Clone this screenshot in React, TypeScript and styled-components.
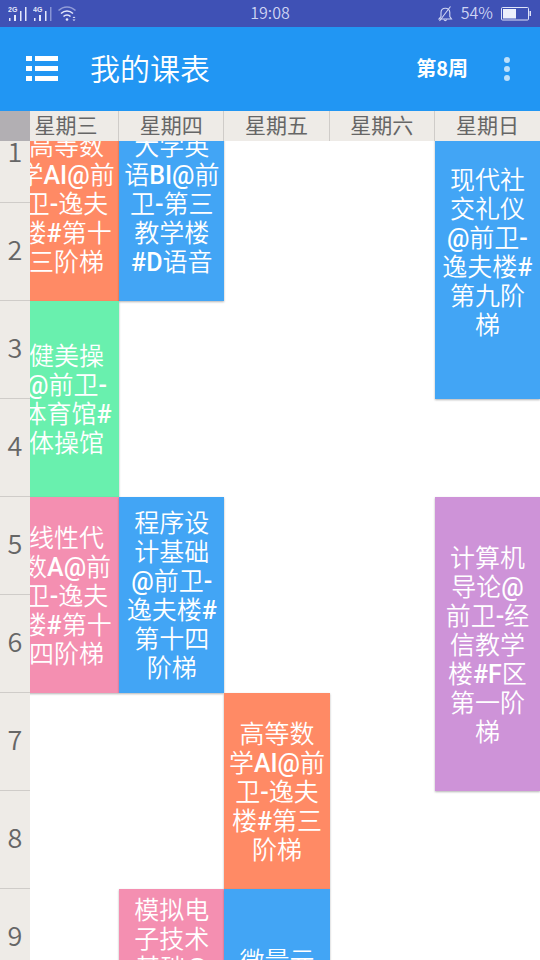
import React from 'react';
import styled, { createGlobalStyle } from 'styled-components';

const GlobalStyle = createGlobalStyle`
  * { box-sizing: border-box; }
  body {
    margin: 0;
    background: #fff;
    font-family: Roboto, 'Noto Sans CJK SC', sans-serif;
  }
  button {
    margin: 0;
    padding: 0;
    border: 0;
    background: none;
    color: inherit;
    font: inherit;
  }
`;

const Screen = styled.div`
  display: flex;
  flex-direction: column;
  height: 100vh;
  overflow: hidden;
`;

const StatusBar = styled.div`
  display: grid;
  grid-template-columns: 1fr auto 1fr;
  align-items: center;
  flex: none;
  height: 27px;
  padding: 0 8px;
  background: #3f51b5;
  color: #cfd5f3;
`;

const StatusText = styled.span`
  padding-bottom: 3px;
  font-family: 'Noto Sans CJK SC', sans-serif;
  font-size: 16px;
  font-weight: 350;
  line-height: 24px;
`;

const StatusGroup = styled.div<{ $end?: boolean }>`
  display: flex;
  align-items: center;
  justify-content: ${(p) => (p.$end ? 'flex-end' : 'flex-start')};
  gap: ${(p) => (p.$end ? '8px' : '5px')};
`;

const AppBar = styled.header`
  display: flex;
  align-items: center;
  flex: none;
  height: 84px;
  padding: 0 21px 0 26px;
  background: #2196f3;
  color: #fff;
`;

const IconButton = styled.button`
  display: flex;
  align-items: center;
  justify-content: center;
`;

const Title = styled.h1`
  flex: 1;
  margin: 0 0 0 32px;
  padding-bottom: 4px;
  font-family: 'Noto Sans CJK SC', sans-serif;
  font-size: 30px;
  font-weight: 350;
  line-height: 40px;
`;

const WeekButton = styled.button`
  && {
    margin-right: 27px;
    padding-bottom: 4px;
    font-family: 'Noto Sans CJK SC', sans-serif;
    font-size: 20px;
    font-weight: 700;
  }
`;

const DayHeader = styled.div`
  display: flex;
  flex: none;
  height: 30px;
  background: #eeebe7;
`;

const Corner = styled.div`
  flex: none;
  width: 30px;
  background: #b2afb3;
`;

const Viewport = styled.div`
  flex: 1;
  min-width: 0;
  overflow: hidden;
`;

const dayColumns = `
  display: grid;
  grid-template-columns: repeat(5, 1fr);
  margin-left: -16px;
`;

const DayNames = styled.div`
  ${dayColumns}
  height: 30px;
`;

const DayName = styled.div`
  border-right: 1px solid #cfccc9;
  color: #666;
  font-family: 'Noto Sans CJK SC', sans-serif;
  font-size: 21px;
  line-height: 26px;
  text-align: center;
  &:last-child { border-right: 0; }
`;

const Body = styled.main`
  display: flex;
  flex: 1;
  min-height: 0;
  overflow: hidden;
`;

const Periods = styled.div`
  flex: none;
  width: 30px;
  margin-top: -36px;
`;

const Period = styled.div`
  height: 98px;
  border-bottom: 1px solid #cfccc9;
  background: #eeebe7;
  color: #666;
  font-family: 'Noto Sans CJK SC', sans-serif;
  font-size: 27px;
  font-weight: 350;
  line-height: 91px;
  text-align: center;
`;

const Lessons = styled.div`
  ${dayColumns}
  grid-template-rows: repeat(12, 98px);
  margin-top: -36px;
`;

const Lesson = styled.button<{ $day: number; $from: number; $span: number; $color: string; $top?: number }>`
  && {
    display: flex;
    flex-direction: column;
    align-items: center;
    justify-content: ${(p) => (p.$top === undefined ? 'center' : 'flex-start')};
    grid-column: ${(p) => p.$day};
    grid-row: ${(p) => p.$from} / span ${(p) => p.$span};
    padding-top: ${(p) => p.$top ?? 2}px;
    overflow: hidden;
    background: ${(p) => p.$color};
    box-shadow: 0 1px 2px rgba(0, 0, 0, 0.3);
    color: #fff;
    font-size: 25px;
    font-weight: 350;
    line-height: 29px;
    white-space: nowrap;
  }
`;

const Line = styled.span`
  display: block;
`;

const Latin = styled.span`
  font-weight: 500;
`;

const BLUE = '#42a5f5';
const ORANGE = '#ff8a65';
const GREEN = '#69f0ae';
const PINK = '#f48fb1';
const PURPLE = '#ce93d8';

interface LessonData {
  day: number;
  from: number;
  span: number;
  color: string;
  lines: string[];
  top?: number;
}

const days = ['星期三', '星期四', '星期五', '星期六', '星期日'];
const periods = [1, 2, 3, 4, 5, 6, 7, 8, 9];

const lessons: LessonData[] = [
  { day: 1, from: 1, span: 2, color: ORANGE, lines: ['高等数', '学AI@前', '卫-逸夫', '楼#第十', '三阶梯'] },
  { day: 2, from: 1, span: 2, color: BLUE, lines: ['大学英', '语BI@前', '卫-第三', '教学楼', '#D语音'] },
  { day: 5, from: 1, span: 3, color: BLUE, lines: ['现代社', '交礼仪', '@前卫-', '逸夫楼#', '第九阶', '梯'] },
  { day: 1, from: 3, span: 2, color: GREEN, lines: ['健美操', '@前卫-', '体育馆#', '体操馆'] },
  { day: 1, from: 5, span: 2, color: PINK, lines: ['线性代', '数A@前', '卫-逸夫', '楼#第十', '四阶梯'] },
  { day: 2, from: 5, span: 2, color: BLUE, lines: ['程序设', '计基础', '@前卫-', '逸夫楼#', '第十四', '阶梯'] },
  { day: 5, from: 5, span: 3, color: PURPLE, lines: ['计算机', '导论@', '前卫-经', '信教学', '楼#F区', '第一阶', '梯'] },
  { day: 3, from: 7, span: 2, color: ORANGE, lines: ['高等数', '学AI@前', '卫-逸夫', '楼#第三', '阶梯'] },
  { day: 2, from: 9, span: 2, color: PINK, lines: ['模拟电', '子技术', '基础@'], top: 7 },
  { day: 3, from: 9, span: 3, color: BLUE, lines: ['微量元'], top: 58 },
];

function MixedLine({ text }: { text: string }) {
  const parts = text.split(/([A-Z@#-]+)/).filter(Boolean);
  return (
    <Line>
      {parts.map((part, i) => (/^[A-Z@#-]/.test(part) ? <Latin key={i}>{part}</Latin> : part))}
    </Line>
  );
}

function Signal({ label, dim }: { label: string; dim?: boolean }) {
  return (
    <svg width="20" height="20" viewBox="0 0 20 20" fill="#e4e8fb">
      <text x="0" y="8" fontFamily="Liberation Sans" fontWeight="700" fontSize="7">{label}</text>
      <rect x="1" y="14" width="1.500" height="3" />
      <rect x="6" y="11" width="2" height="6" />
      <rect x="12" y="7" width="1.500" height="10" />
      <rect x="17" y="3" width="1.500" height="14" opacity={dim ? 0.45 : 1} />
    </svg>
  );
}

function Wifi() {
  return (
    <svg width="20" height="20" viewBox="0 0 20 20" fill="none" stroke="#e4e8fb" strokeWidth="1.5">
      <path d="M0.500 6.500C5.500 1.700 12.500 1.700 17.500 6.500" opacity="0.5" />
      <path d="M3 9.500C6.500 6 11.500 6 15 9.500" />
      <path d="M5.500 12.500C7.500 10.500 10.500 10.500 12.500 12.500" />
      <circle cx="9" cy="15.500" r="1.300" fill="#e4e8fb" stroke="none" />
      <path d="M14.500 14l1.500-1.500 1.500 1.500zM14.500 15.500l1.500 1.500 1.500-1.500z" fill="#e4e8fb" stroke="none" />
    </svg>
  );
}

function Muted() {
  return (
    <svg width="15" height="16" viewBox="0 0 15 16" fill="none" stroke="#cfd5f3" strokeWidth="1.1">
      <path d="M1 13H13.500L11.800 10.500V6.500C11.800 4 10 2.300 7.300 2.300C4.600 2.300 3 4 3 6.500V10.500Z" />
      <path d="M5.800 13.500Q7.300 15.800 8.800 13.500M12.500 0.500L1.500 15" />
    </svg>
  );
}

function Battery() {
  return (
    <svg width="31" height="14" viewBox="0 0 31 14">
      <rect x="0.500" y="0.500" width="27" height="12.500" rx="1" fill="none" stroke="#dfe3f8" />
      <rect x="2" y="2" width="13" height="9.500" fill="#eceffb" />
      <rect x="28.500" y="4" width="1.500" height="5" fill="#dfe3f8" />
    </svg>
  );
}

export default function App() {
  return (
    <Screen>
      <GlobalStyle />
      <StatusBar>
        <StatusGroup>
          <Signal label="2G" />
          <Signal label="4G" dim />
          <Wifi />
        </StatusGroup>
        <StatusText>19:08</StatusText>
        <StatusGroup $end>
          <Muted />
          <StatusText>54%</StatusText>
          <Battery />
        </StatusGroup>
      </StatusBar>
      <AppBar>
        <IconButton aria-label="菜单">
          <svg width="32" height="26" viewBox="0 0 32 26" fill="#fff">
            <path d="M0 0h6v5H0zM9 0h23v5H9zM0 10h6v5H0zM9 10h23v5H9zM0 20h6v5H0zM9 20h23v5H9z" />
          </svg>
        </IconButton>
        <Title>我的课表</Title>
        <WeekButton>第8周</WeekButton>
        <IconButton aria-label="更多">
          <svg width="24" height="26" viewBox="0 0 24 26" fill="#bde0fb">
            <circle cx="12" cy="4" r="3" />
            <circle cx="12" cy="13" r="3" />
            <circle cx="12" cy="22" r="3" />
          </svg>
        </IconButton>
      </AppBar>
      <DayHeader>
        <Corner />
        <Viewport>
          <DayNames>
            {days.map((d) => <DayName key={d}>{d}</DayName>)}
          </DayNames>
        </Viewport>
      </DayHeader>
      <Body>
        <Periods>
          {periods.map((n) => <Period key={n}>{n}</Period>)}
        </Periods>
        <Viewport>
          <Lessons>
            {lessons.map((l) => (
              <Lesson key={`${l.day}-${l.from}`} $day={l.day} $from={l.from} $span={l.span} $color={l.color} $top={l.top}>
                {l.lines.map((text) => <MixedLine key={text} text={text} />)}
              </Lesson>
            ))}
          </Lessons>
        </Viewport>
      </Body>
    </Screen>
  );
}
